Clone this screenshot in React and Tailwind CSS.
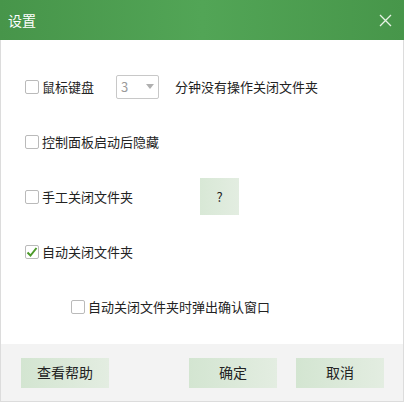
import React from "react";

function Box({ checked }) {
  return (
    <span className="w-[14px] h-[14px] border border-[#bababa] rounded-[2px] bg-white flex items-center justify-center shrink-0">
      {checked && (
        <svg width="12" height="12" viewBox="0 0 12 12">
          <path d="M1.5 6.5 L4.5 9.5 L10.5 2" fill="none" stroke="#4c9a2a" strokeWidth="2" />
        </svg>
      )}
    </span>
  );
}

function Option({ checked, label }) {
  return (
    <label className="flex items-center gap-[3px] text-[13px] text-[#222]">
      <Box checked={checked} />
      <span>{label}</span>
    </label>
  );
}

function GreenButton({ children, className }) {
  return (
    <button className={"bg-gradient-to-r from-[#d3e5d1] to-[#e3ede1] text-[14px] text-[#222] " + className}>
      {children}
    </button>
  );
}

export default function App() {
  return (
    <div
      className="w-[404px] h-[402px] flex flex-col border-x border-b border-[#dcdcdc] bg-white"
      style={{ fontFamily: '"Noto Sans CJK SC", "Noto Sans", sans-serif' }}
    >
      <div className="h-[40px] -mx-px bg-gradient-to-r from-[#47954a] via-[#52a556] to-[#47964a] flex items-center justify-between pl-[8px] pr-[12px]">
        <span className="text-white text-[14px]">设置</span>
        <svg width="13" height="13" viewBox="0 0 13 13">
          <path d="M1 1 L12 12 M12 1 L1 12" stroke="#e8f3e6" strokeWidth="1.3" />
        </svg>
      </div>

      <div className="flex-1 pt-[19px] pl-[24px] flex flex-col">
        <div className="h-[55px] flex items-center">
          <Option label="鼠标键盘" />
          <div className="ml-[22px] w-[43px] h-[24px] border border-[#c8c8c8] rounded-[2px] flex items-center justify-between px-[4px] text-[13px] text-[#9a9a9a]">
            <span>3</span>
            <svg width="8" height="5" viewBox="0 0 8 5">
              <path d="M0 0 L8 0 L4 5 Z" fill="#b0b0b0" />
            </svg>
          </div>
          <span className="ml-[16px] text-[13px] text-[#222]">分钟没有操作关闭文件夹</span>
        </div>
        <div className="h-[55px] flex items-center">
          <Option label="控制面板启动后隐藏" />
        </div>
        <div className="h-[55px] flex items-center">
          <Option label="手工关闭文件夹" />
          <GreenButton className="ml-[67px] w-[39px] h-[37px] !text-[13px] bg-gradient-to-b from-[#d8e8d6] to-[#e0ebde]">?</GreenButton>
        </div>
        <div className="h-[55px] flex items-center">
          <Option checked label="自动关闭文件夹" />
        </div>
        <div className="h-[55px] flex items-center pl-[46px]">
          <Option label="自动关闭文件夹时弹出确认窗口" />
        </div>
      </div>

      <div className="h-[57px] bg-[#f3f3f3] flex items-center pl-[20px] pr-[19px]">
        <GreenButton className="w-[88px] h-[30px]">查看帮助</GreenButton>
        <div className="flex-1" />
        <GreenButton className="w-[88px] h-[30px]">确定</GreenButton>
        <GreenButton className="w-[88px] h-[30px] ml-[19px]">取消</GreenButton>
      </div>
    </div>
  );
}
